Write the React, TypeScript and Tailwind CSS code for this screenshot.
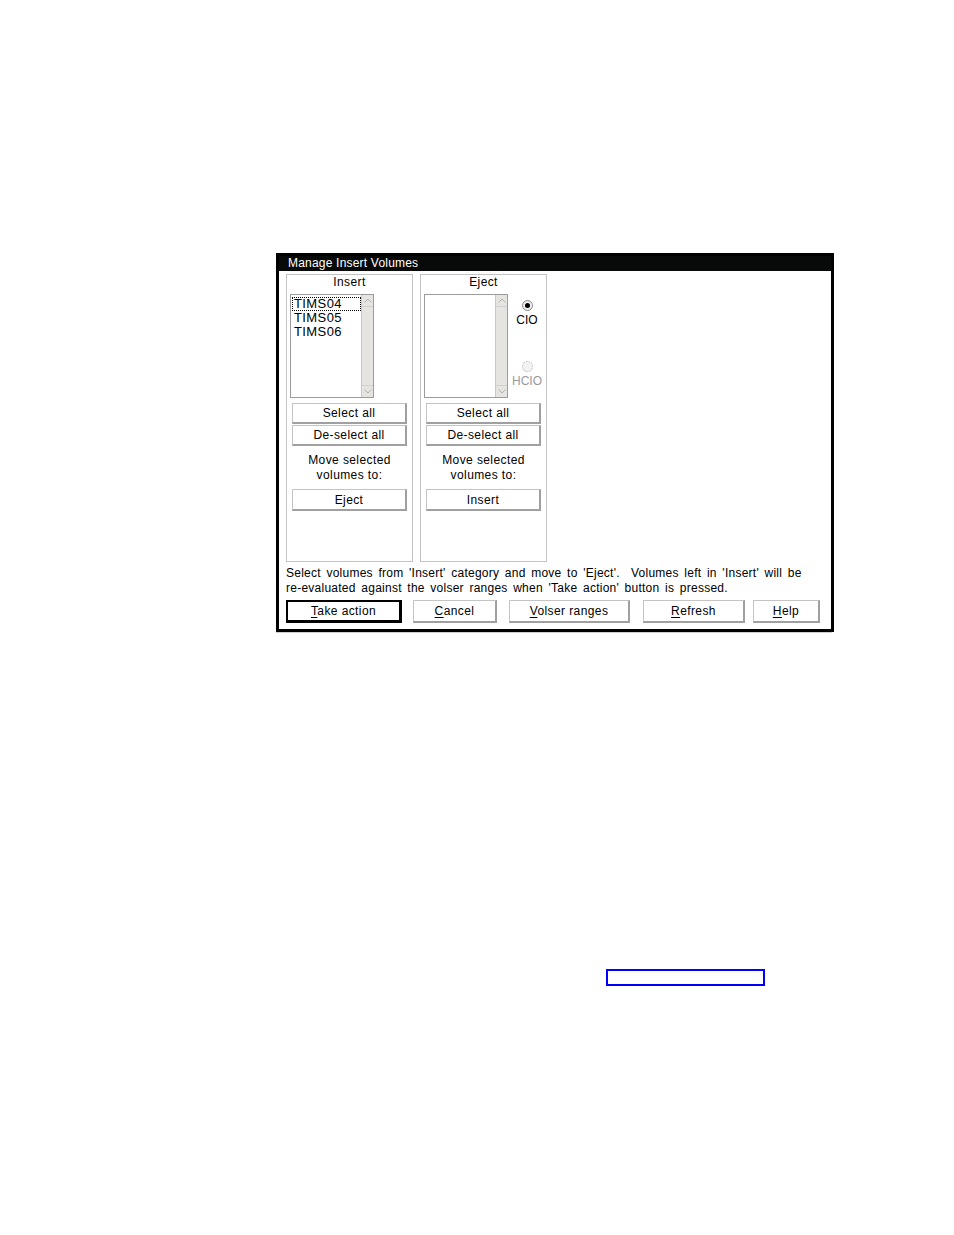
import React from "react"

const font = "font-['Liberation_Sans',Arial,sans-serif]"

function ScrollBar() {
  return (
    <div className="w-[12px] h-full bg-[#e6e4e0] border-l border-[#c8c8c8] flex flex-col justify-between">
      <div className="h-[12px] flex items-center justify-center border-b border-[#d0d0d0]">
        <svg width="8" height="5" viewBox="0 0 8 5">
          <path d="M0.5 4.5 L4 1 L7.5 4.5" fill="none" stroke="#b0b0b0" strokeWidth="1" />
        </svg>
      </div>
      <div className="h-[12px] flex items-center justify-center border-t border-[#d0d0d0]">
        <svg width="8" height="5" viewBox="0 0 8 5">
          <path d="M0.5 0.5 L4 4 L7.5 0.5" fill="none" stroke="#b0b0b0" strokeWidth="1" />
        </svg>
      </div>
    </div>
  )
}

function ListBox({ items }: { items: string[] }) {
  return (
    <div className="w-[84px] h-[104px] border border-[#9c9c9c] flex bg-white">
      <div className="flex-1 pt-[2px] pl-[1px]">
        {items.map((it, i) => (
          <div
            key={it}
            className={`h-[14px] leading-[12px] pl-[1px] text-[13px] tracking-[0.4px] text-black ${
              i === 0 ? "border border-dotted border-black" : "border border-transparent"
            }`}
          >
            {it}
          </div>
        ))}
      </div>
      <ScrollBar />
    </div>
  )
}

function Btn({ label, className }: { label: React.ReactNode; className: string }) {
  return (
    <div
      className={`bg-white border-t border-l border-[#c4c4c4] border-r-2 border-b-2 border-r-[#a0a0a0] border-b-[#a0a0a0] flex items-center justify-center text-[12px] tracking-[0.4px] text-black ${className}`}
    >
      {label}
    </div>
  )
}

function Panel({ title, target, eject }: { title: string; target: string; eject?: boolean }) {
  return (
    <div className="w-[127px] h-[288px] border border-[#c4c4c4] flex flex-col">
      <div className="h-[19px] leading-[14px] text-center text-[12px] tracking-[0.4px] text-black">{title}</div>
      <div className="flex pl-[3px]">
        <ListBox items={eject ? [] : ["TIMS04", "TIMS05", "TIMS06"]} />
        {eject && (
          <div className="flex-1 flex flex-col items-center pt-[6px]">
            <div className="w-[11px] h-[11px] rounded-full border border-[#8a8a8a] bg-[#eeeeee] flex items-center justify-center">
              <div className="w-[5px] h-[5px] rounded-full bg-black" />
            </div>
            <div className="text-[12px] leading-[15px] mt-[2px] text-black">CIO</div>
            <div className="w-[11px] h-[11px] rounded-full border border-dotted border-[#bbbbbb] bg-[#f2f2f2] mt-[33px]" />
            <div className="text-[12px] leading-[15px] mt-[2px] text-[#9a9a9a]">HCIO</div>
          </div>
        )}
      </div>
      <div className="pl-[5px]">
        <Btn label="Select all" className="w-[115px] h-[21px] mt-[5px]" />
        <Btn label="De-select all" className="w-[115px] h-[21px] mt-[1px]" />
        <div className="w-[115px] mt-[7px] text-center text-[12px] leading-[15px] tracking-[0.4px] text-black">
          Move selected
          <br />
          volumes to:
        </div>
        <Btn label={target} className="w-[115px] h-[22px] mt-[6px]" />
      </div>
    </div>
  )
}

function U({ c, rest }: { c: string; rest: string }) {
  return (
    <span>
      <span className="underline underline-offset-2">{c}</span>
      {rest}
    </span>
  )
}

export default function App() {
  return (
    <div className={`min-h-[1235px] bg-white pt-[253px] pl-[276px] ${font}`}>
      <div className="w-[558px] h-[379px] border-[3px] border-black bg-white flex flex-col">
        <div className="h-[15px] bg-[#080a0a] text-white text-[12px] leading-[14px] pl-[9px] tracking-[0.2px]">
          Manage Insert Volumes
        </div>
        <div className="pl-[7px] pt-[3px]">
          <div className="flex gap-[7px]">
            <Panel title="Insert" target="Eject" />
            <Panel title="Eject" target="Insert" eject />
          </div>
          <div className="mt-[4px] text-[12px] leading-[15px] text-black whitespace-nowrap tracking-[0.25px] [word-spacing:2px]">
            Select volumes from 'Insert' category and move to 'Eject'.&nbsp; Volumes left in 'Insert' will be
            <br />
            re-evaluated against the volser ranges when 'Take action' button is pressed.
          </div>
          <div className="flex mt-[4px]">
            <div className="w-[116px] h-[23px] border-t-2 border-l-2 border-r-[3px] border-b-[3px] border-black bg-white flex items-center justify-center text-[12px] tracking-[0.4px] text-black">
              <U c="T" rest="ake action" />
            </div>
            <Btn label={<U c="C" rest="ancel" />} className="w-[84px] h-[23px] ml-[11px]" />
            <Btn label={<U c="V" rest="olser ranges" />} className="w-[121px] h-[23px] ml-[12px]" />
            <Btn label={<U c="R" rest="efresh" />} className="w-[102px] h-[23px] ml-[13px]" />
            <Btn label={<U c="H" rest="elp" />} className="w-[67px] h-[23px] ml-[8px]" />
          </div>
        </div>
      </div>
      <div className="h-[1px] w-[556px] bg-[#d0d0d0]" />
      <div className="ml-[330px] mt-[336px] w-[159px] h-[17px] border-2 border-[#0000ff]" />
    </div>
  )
}
